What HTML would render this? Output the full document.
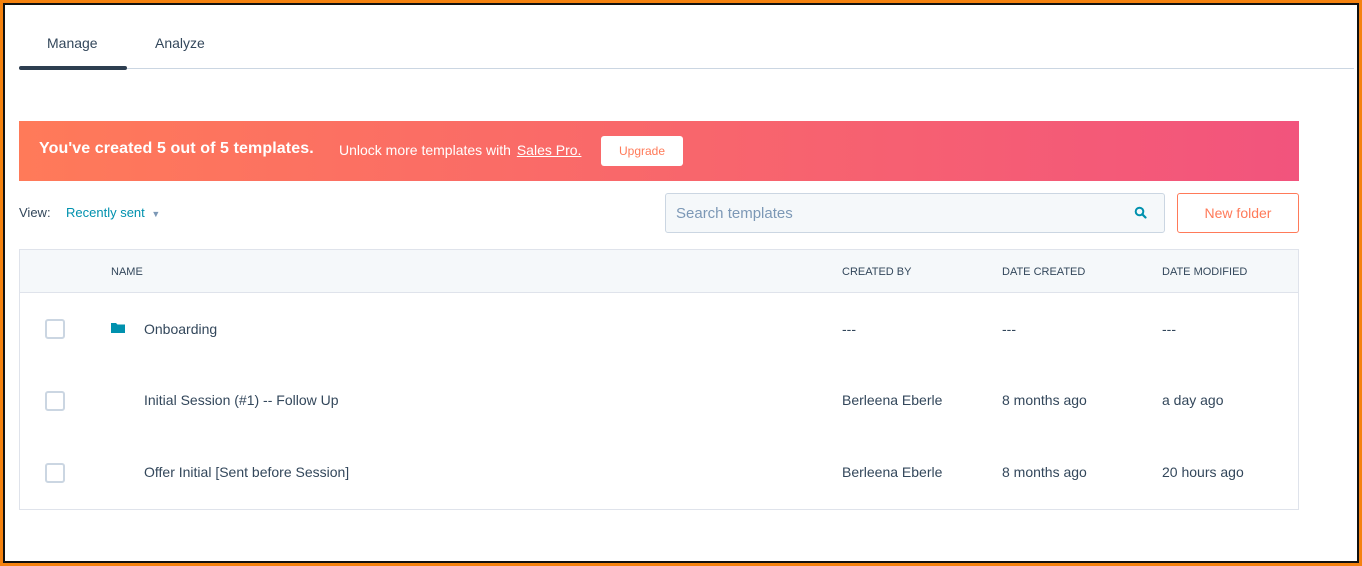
<!DOCTYPE html>
<html><head><meta charset="utf-8"><style>
*{margin:0;padding:0;box-sizing:border-box}
html,body{width:1362px;height:566px;overflow:hidden;background:#f5820f}
body{font-family:"Liberation Sans",sans-serif;color:#33475b;position:relative}
.frame{position:absolute;left:3px;top:3px;width:1356px;height:560px;border:2px solid #111;background:#fff;overflow:hidden}
.a{position:absolute;white-space:nowrap}
</style></head><body>
<div class="frame"></div>
<div class="a" style="left:47px;top:35px;font-size:14px">Manage</div>
<div class="a" style="left:155px;top:35px;font-size:14px">Analyze</div>
<div class="a" style="left:19px;top:68px;width:1335px;height:1px;background:#cbd6e2"></div>
<div class="a" style="left:19px;top:66px;width:108px;height:4px;border-radius:2px;background:#2d3e50"></div>

<div class="a" style="left:19px;top:121px;width:1280px;height:60px;background:linear-gradient(90deg,#ff7a59,#f2547d)"></div>
<div class="a" style="left:39px;top:140px;font-size:16px;font-weight:bold;color:#fff;letter-spacing:0.1px">You've created 5 out of 5 templates.</div>
<div class="a" style="left:339px;top:142px;font-size:14px;color:#fff">Unlock more templates with <span style="text-decoration:underline;margin-left:2px">Sales Pro.</span></div>
<div class="a" style="left:601px;top:136px;width:82px;height:30px;background:#fff;border-radius:3px;color:#ff7a59;font-size:12px;text-align:center;line-height:30px">Upgrade</div>

<div class="a" style="left:19px;top:205px;font-size:13px">View:</div>
<div class="a" style="left:66px;top:205px;font-size:13px;color:#0091ae">Recently sent <span style="font-size:9px;color:#7c98b6;margin-left:3px">▼</span></div>

<div class="a" style="left:665px;top:193px;width:500px;height:40px;background:#f5f8fa;border:1px solid #cbd6e2;border-radius:3px"></div>
<div class="a" style="left:676px;top:205px;font-size:15px;color:#7c98b6">Search templates</div>
<svg class="a" style="left:1134px;top:206px" width="13" height="13" viewBox="0 0 13 13"><circle cx="5.5" cy="5.5" r="3.8" fill="none" stroke="#0091ae" stroke-width="2"/><path d="M8.3 8.3L11.5 11.5" stroke="#0091ae" stroke-width="2.2" stroke-linecap="round"/></svg>
<div class="a" style="left:1177px;top:193px;width:122px;height:40px;border:1px solid #ff7a59;border-radius:3px;color:#ff7a59;font-size:14px;text-align:center;line-height:38px">New folder</div>

<div class="a" style="left:19px;top:249px;width:1280px;height:261px;border:1px solid #dfe3eb"></div>
<div class="a" style="left:20px;top:250px;width:1278px;height:43px;background:#f5f8fa;border-bottom:1px solid #dfe3eb"></div>
<div class="a" style="left:111px;top:266px;font-size:11px">NAME</div>
<div class="a" style="left:842px;top:266px;font-size:11px">CREATED BY</div>
<div class="a" style="left:1002px;top:266px;font-size:11px">DATE CREATED</div>
<div class="a" style="left:1162px;top:266px;font-size:11px">DATE MODIFIED</div>

<div class="a" style="left:45px;top:319px;width:20px;height:20px;border:2px solid #cbd6e2;border-radius:3px"></div>
<div class="a" style="left:45px;top:391px;width:20px;height:20px;border:2px solid #cbd6e2;border-radius:3px"></div>
<div class="a" style="left:45px;top:463px;width:20px;height:20px;border:2px solid #cbd6e2;border-radius:3px"></div>
<svg class="a" style="left:111px;top:322px" width="14" height="11" viewBox="0 0 14 11"><path d="M0 1h5l1.5 1.5H14V11H0z" fill="#0091ae"/></svg>

<div class="a" style="left:144px;top:321px;font-size:14px">Onboarding</div>
<div class="a" style="left:842px;top:321px;font-size:14px">---</div>
<div class="a" style="left:1002px;top:321px;font-size:14px">---</div>
<div class="a" style="left:1162px;top:321px;font-size:14px">---</div>

<div class="a" style="left:144px;top:392px;font-size:14px">Initial Session (#1) -- Follow Up</div>
<div class="a" style="left:842px;top:392px;font-size:14px">Berleena Eberle</div>
<div class="a" style="left:1002px;top:392px;font-size:14px">8 months ago</div>
<div class="a" style="left:1162px;top:392px;font-size:14px">a day ago</div>

<div class="a" style="left:144px;top:464px;font-size:14px">Offer Initial [Sent before Session]</div>
<div class="a" style="left:842px;top:464px;font-size:14px">Berleena Eberle</div>
<div class="a" style="left:1002px;top:464px;font-size:14px">8 months ago</div>
<div class="a" style="left:1162px;top:464px;font-size:14px">20 hours ago</div>
</body></html>
